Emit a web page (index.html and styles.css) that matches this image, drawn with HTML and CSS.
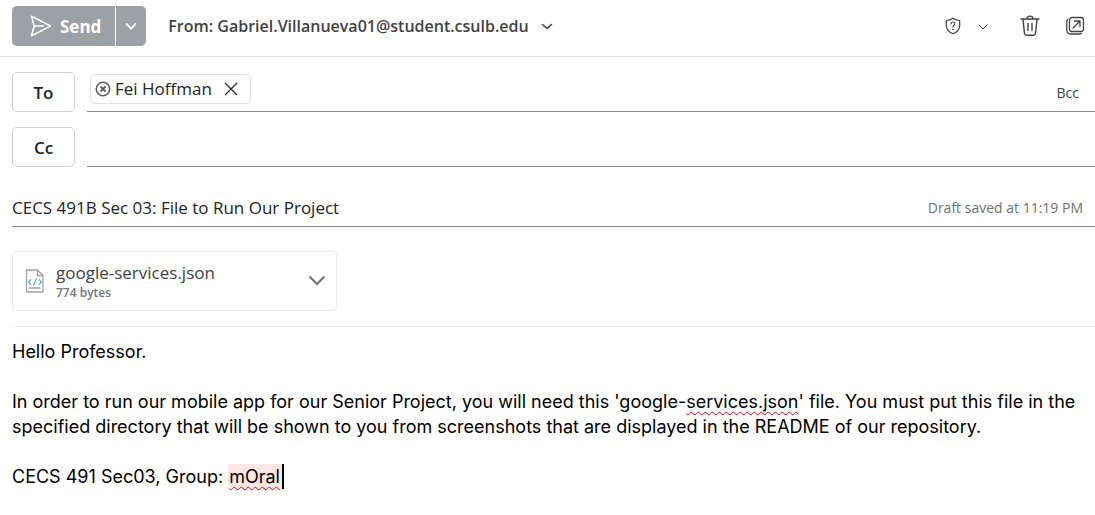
FILE: index.html
```html
<!DOCTYPE html>
<html lang="en">
<head>
<meta charset="utf-8">
<title>New message</title>
<link rel="stylesheet" href="styles.css">
</head>
<body>
<form class="compose">
  <header class="toolbar">
    <div class="send-group">
      <button type="button" class="send">
        <svg width="22" height="22" viewBox="0 0 22 22" fill="none" stroke="currentColor" stroke-width="1.5" stroke-linejoin="round" stroke-linecap="round"><path d="M1.5 1.2 20.500 11 1.500 20.800 4.200 11ZM4.200 11H13.500"/></svg>
        <span>Send</span>
      </button>
      <button type="button" class="send-more" aria-label="More send options">
        <svg width="12" height="8" viewBox="0 0 12 8" fill="none" stroke="currentColor" stroke-width="1.800" stroke-linecap="round" stroke-linejoin="round"><path d="m1.500 2 4.500 4.500 4.500-4.500"/></svg>
      </button>
    </div>
    <button type="button" class="from">
      <span>From: Gabriel.Villanueva01@student.csulb.edu</span>
      <svg width="12" height="8" viewBox="0 0 12 8" fill="none" stroke="currentColor" stroke-width="1.500" stroke-linecap="round" stroke-linejoin="round"><path d="m1.500 2.500 4.500 4 4.500-4"/></svg>
    </button>
    <div class="actions">
      <button type="button" class="icon-button protect" aria-label="Sensitivity">
        <svg width="16" height="18" viewBox="0 0 16 18" fill="none" stroke="currentColor" stroke-width="1.200" stroke-linecap="round" stroke-linejoin="round"><path d="M8 1.200C10 2.700 12 3.300 14.700 3.500V8.500C14.700 12.500 12.200 15 8 16.700 3.800 15 1.300 12.500 1.300 8.500V3.500C4 3.300 6 2.700 8 1.200Z"/><path d="M6.200 6.700C6.200 4.400 9.900 4.400 9.900 6.700 9.900 8.300 8 8.300 8 10"/><circle cx="8" cy="12.300" r=".4" fill="currentColor" stroke-width=".8"/></svg>
        <svg width="10" height="8" viewBox="0 0 10 8" fill="none" stroke="currentColor" stroke-linecap="round" stroke-linejoin="round"><path d="m1 3 4 4 4-4"/></svg>
      </button>
      <button type="button" class="icon-button" aria-label="Discard">
        <svg width="20" height="22" viewBox="0 0 20 22" fill="none" stroke="currentColor" stroke-width="1.400" stroke-linecap="round" stroke-linejoin="round"><path d="M1 4H19M7 3.800C7 .2 13 .2 13 3.800M3 4.200 4.400 18Q4.700 20.200 6.800 20.200H13.200Q15.300 20.200 15.600 18L17 4.200M8 8.500V15.500M12 8.500V15.500"/></svg>
      </button>
      <button type="button" class="icon-button" aria-label="Open in new window">
        <svg width="20" height="20" viewBox="0 0 20 20" fill="none" stroke="currentColor" stroke-width="1.300" stroke-linecap="round" stroke-linejoin="round"><rect x="4.500" y="1.500" width="14" height="14" rx="2.500"/><path d="M2.600 3.500Q1.800 4.500 1.800 6V14Q1.800 18 5.800 18H14Q15.500 18 16.500 17.200M8 12 14.500 5.500M9.500 5H15V10.500"/></svg>
      </button>
    </div>
  </header>

  <div class="recipient">
    <button type="button" class="recipient-button">To</button>
    <div class="recipient-field">
      <span class="chip">
        <svg width="16" height="16" viewBox="0 0 16 16" fill="none" stroke="currentColor" stroke-width="1.600"><circle cx="8" cy="8" r="6.700"/><path d="m5.500 5.500 5 5m0-5-5 5" stroke-width="1.900"/></svg>
        <span>Fei Hoffman</span>
        <button type="button" class="chip-remove" aria-label="Remove Fei Hoffman"><svg width="14" height="14" viewBox="0 0 14 14" fill="none" stroke="currentColor" stroke-width="1.200"><path d="m1 1 12 12M13 1 1 13"/></svg></button>
      </span>
      <input class="recipient-input" type="text" aria-label="To">
      <button type="button" class="bcc">Bcc</button>
    </div>
  </div>
  <div class="recipient">
    <button type="button" class="recipient-button">Cc</button>
    <div class="recipient-field">
      <input class="recipient-input" type="text" aria-label="Cc">
    </div>
  </div>

  <div class="subject">
    <input class="subject-input" type="text" aria-label="Subject" value="CECS 491B Sec 03: File to Run Our Project">
    <span class="status">Draft saved at 11:19 PM</span>
  </div>

  <div class="attachments">
    <div class="attachment">
      <svg width="20" height="24" viewBox="0 0 20 24" fill="none" stroke="#a3a3a3" stroke-width="1.300" stroke-linejoin="round"><path d="M1.500 1H12.500L18 6.500V23H1.500ZM12.500 1V6.500H18M4 19H15.500"/><path stroke="#60a9dc" d="M6 10.300 3.700 13 6 15.700M14 10.300 16.300 13 14 15.700M11.500 9.500 8.500 16.500"/></svg>
      <div class="file">
        <span class="file-name">google-services.json</span>
        <span class="file-size">774 bytes</span>
      </div>
      <button type="button" class="icon-button file-more" aria-label="Attachment options"><svg width="18" height="12" viewBox="0 0 18 12" fill="none" stroke="currentColor" stroke-width="2"><path d="m1.500 1.500 7.500 7.500 7.500-7.500"/></svg></button>
    </div>
  </div>

  <div class="message" role="textbox" aria-multiline="true" aria-label="Message body">
    <p>Hello Professor.</p>
    <p>In order to run our mobile app for our Senior Project, you will need this 'google-<span class="misspelled">services.json</span>' file. You must put this file in the specified directory that will be shown to you from screenshots that are displayed in the README of our repository.</p>
    <p>CECS 491 Sec03, Group: <span class="misspelled current">mOral</span></p>
  </div>
</form>
</body>
</html>
```
FILE: styles.css
```css
* { box-sizing: border-box; }

body {
  margin: 0;
  background: #fff;
  color: #242424;
  font-family: "Open Sans", "Noto Sans", sans-serif;
  font-size: 17px;
}

button, input {
  margin: 0;
  padding: 0;
  border: 0;
  background: none;
  color: inherit;
  font: inherit;
}

input { outline: none; }
svg { display: block; flex: none; }

.toolbar {
  display: flex;
  align-items: center;
  height: 57px;
  padding: 0 10px 4px 12px;
  border-bottom: 1px solid #e0e0e0;
  color: #424242;
}

.send-group {
  display: flex;
  gap: 1px;
  height: 40px;
  color: #fff;
}

.send, .send-more {
  display: flex;
  align-items: center;
  background: #9da0a5;
}

.send {
  gap: 8px;
  padding: 0 14px 0 18px;
  border-radius: 5px 0 0 5px;
  font-weight: 700;
}

.send-more {
  padding: 0 9px;
  border-radius: 0 5px 5px 0;
}

.from {
  display: flex;
  align-items: center;
  gap: 12px;
  margin-left: 22px;
  font-size: 16px;
  font-weight: 600;
  white-space: nowrap;
}

.actions {
  display: flex;
  align-items: center;
  gap: 25px;
  margin-left: auto;
}

.icon-button { display: flex; align-items: center; }
.protect { gap: 17px; margin-right: 7px; }

.recipient {
  display: flex;
  gap: 12px;
  margin-top: 15px;
  padding-left: 12px;
}

.recipient-button {
  width: 63px;
  height: 40px;
  border: 1px solid #d1d1d1;
  border-radius: 5px;
  font-weight: 600;
}

.recipient-field {
  display: flex;
  flex: 1;
  align-items: center;
  padding: 0 16px 6px 3px;
  border-bottom: 1px solid #8a8a8a;
}

.chip {
  display: flex;
  align-items: center;
  gap: 4px;
  height: 30px;
  padding: 0 12px 0 4px;
  border: 1px solid #e0e0e0;
  border-radius: 5px;
  white-space: nowrap;
}

.chip > svg { color: #616161; }
.chip-remove { margin-left: 8px; }
.recipient-input { flex: 1; min-width: 0; }

.bcc {
  padding-top: 8px;
  color: #424242;
  font-size: 14px;
}

.subject {
  display: flex;
  align-items: center;
  gap: 16px;
  height: 40px;
  margin: 20px 0 0 12px;
  padding: 2px 12px 0 0;
  border-bottom: 1px solid #8a8a8a;
}

.subject-input { flex: 1; min-width: 0; }
.status { color: #707070; font-size: 14px; }

.attachments {
  margin-left: 12px;
  padding: 24px 0 15px;
  border-bottom: 1px solid #ebebeb;
}

.attachment {
  display: flex;
  align-items: center;
  gap: 11px;
  width: 325px;
  height: 60px;
  padding: 0 10px 0 12px;
  border: 1px solid #ebebeb;
  border-radius: 5px;
}

.file { display: flex; flex-direction: column; padding-top: 2px; }
.file-name { color: #424242; line-height: 22px; }
.file-size { color: #757575; font-size: 12px; font-weight: 600; line-height: 18px; }
.file-more { margin-left: auto; color: #757575; }

.message {
  padding: 12px 12px 24px;
  color: #000;
  font-family: Inter, Roboto, sans-serif;
  font-size: 18px;
  line-height: 25px;
}

.message p { margin: 0 0 25px; }

.misspelled {
  text-decoration: underline wavy #e00b1c 1px;
  text-decoration-skip-ink: none;
  text-underline-offset: 3px;
}

.current {
  padding: 2px 2px 2px 1px;
  border-right: 2px solid #000;
  border-radius: 3px 0 0 0;
  background: #fde7e4;
}
```
